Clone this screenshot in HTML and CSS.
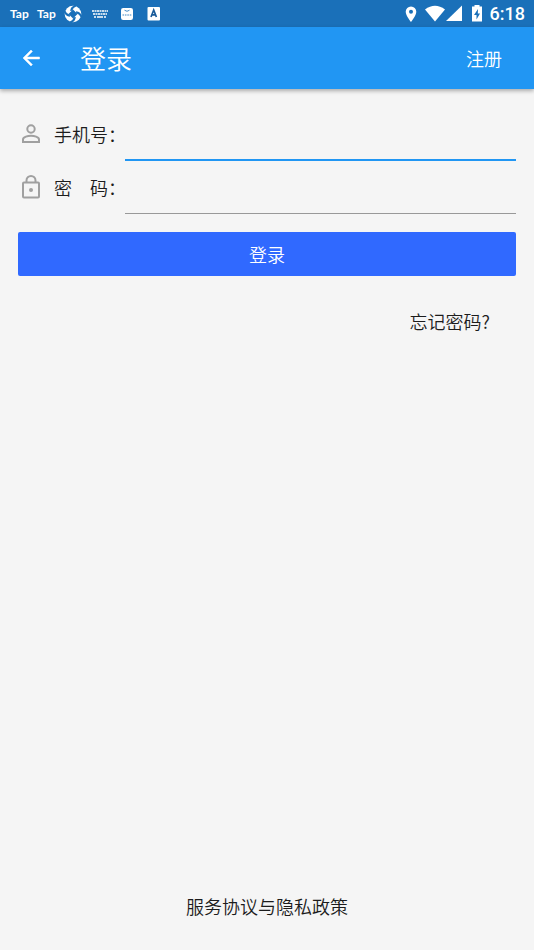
FILE: index.html
```html
<!DOCTYPE html>
<html lang="zh-CN">
<head>
<meta charset="utf-8">
<meta name="viewport" content="width=device-width, initial-scale=1">
<title>登录</title>
<link rel="stylesheet" href="styles.css">
</head>
<body>
<div class="status">
  <div class="status-group notices">
    <span class="tap">Tap</span>
    <span class="tap">Tap</span>
    <svg class="notice" viewBox="0 0 18 18"><circle cx="9" cy="9" r="8.300" fill="#fff"/><g fill="#1a70b9"><path d="M9 4.500L13.500 9 9 13.500 4.500 9z"/><path d="M8.200 5.800Q9 2.500 12.500 1.200L11.500.2Q6.500 1 6.200 6z"/><path d="M12.200 8.200Q15.500 9 16.800 12.500L17.800 11.500Q17 6.500 12 6.200z"/><path d="M9.800 12.200Q9 15.500 5.500 16.800L6.500 17.800Q11.500 17 11.800 12z"/><path d="M5.800 9.800Q2.500 9 1.200 5.500L.2 6.500Q1 11.500 6 11.800z"/></g></svg>
    <svg class="notice" viewBox="0 0 18 18"><g stroke="#fff" stroke-width="1.700" stroke-dasharray="2 .5"><path d="M1 6h16M2 9h14"/></g><path d="M3 12h2M6 12h6M13 12h2" stroke="#fff" stroke-width="1.700"/></svg>
    <svg class="notice" viewBox="0 0 18 18"><rect x="3" y="3" width="12" height="12" rx="2.200" fill="#fff"/><path d="M6.500 5.200q2.500 2.200 5 0" fill="none" stroke="#1a70b9" opacity=".8"/><path d="M4.500 10h9" stroke="#1a70b9" stroke-width="1.400" stroke-dasharray="1.600 .8" opacity=".55"/></svg>
    <svg class="notice" viewBox="0 0 18 18"><rect x="2.500" y="2" width="12.500" height="13.500" rx="1" fill="#fff"/><path d="M6 12l2.700-7 2.700 7M7 9.800h3.500" fill="none" stroke="#1a5b99" stroke-width="1.700"/></svg>
  </div>
  <div class="status-group">
    <svg class="pin" viewBox="0 0 12 18"><path fill="#fff" fill-rule="evenodd" d="M6 1.500a5.300 5.300 0 0 0-5.300 5.300C.7 10.800 6 17 6 17s5.300-6.200 5.300-10.200A5.300 5.300 0 0 0 6 1.500zm0 3.300a2 2 0 1 1 0 4 2 2 0 0 1 0-4z"/></svg>
    <svg class="wifi" viewBox="0 0 20 18"><path fill="#fff" d="M0 4.500Q10-3 20 4.500L10 16.500z"/></svg>
    <svg class="signal" viewBox="0 0 16 18"><path fill="#fff" d="M16 .5v15.500H0z"/></svg>
    <svg class="battery" viewBox="0 0 12 18"><path fill="#fff" d="M3.500 0h5v1.500H11V16.500H1V1.500h2.500z"/><path fill="#1a70b9" d="M7 4L3 10h2.500v4.500L9 8.500H6.800z"/></svg>
    <time>6:18</time>
  </div>
</div>
<header class="appbar">
  <button class="back" type="button" aria-label="返回"><svg viewBox="0 0 24 24"><path fill="#fff" stroke="#fff" stroke-width=".5" d="M20.500 11H7.830l5.590-5.590L12 4l-8 8 8 8 1.410-1.410L7.830 13H20.500z"/></svg></button>
  <h1>登录</h1>
  <a class="register" href="#register">注册</a>
</header>
<main>
  <form>
    <div class="row">
      <svg class="field-icon" viewBox="0 0 26 26"><g fill="none" stroke="#a0a0a0" stroke-width="2"><circle cx="13" cy="8" r="3.700"/><path d="M5 21v-2.500c0-2.600 5-3.700 8-3.700s8 1.100 8 3.700V21z"/></g></svg>
      <label for="phone">手机号：</label>
      <input id="phone" class="active" type="tel">
    </div>
    <div class="row">
      <svg class="field-icon" viewBox="0 0 26 26"><g fill="none" stroke="#a0a0a0" stroke-width="2"><rect x="5" y="8.500" width="16" height="15" rx="1"/><path d="M8.500 8.500V6.500a4.500 4.500 0 0 1 9 0v2"/></g><circle cx="13" cy="16" r="2" fill="#a0a0a0"/></svg>
      <label for="password">密　码：</label>
      <input id="password" type="password">
    </div>
    <button class="submit" type="submit">登录</button>
  </form>
  <a class="forgot" href="#forgot">忘记密码?</a>
</main>
<footer><a href="#terms">服务协议与隐私政策</a></footer>
</body>
</html>
```

FILE: styles.css
```css
* { box-sizing: border-box; }
body {
  margin: 0;
  min-height: 100vh;
  display: flex;
  flex-direction: column;
  background: #f5f5f5;
  color: #1c1c1c;
  font: 350 18px/26px "Noto Sans CJK SC", sans-serif;
}
svg { display: block; flex: none; }
a { color: inherit; text-decoration: none; }
button { border: 0; padding: 0; font: inherit; color: #fff; cursor: pointer; }

.status {
  height: 27px;
  padding: 0 9px 0 10px;
  display: flex;
  align-items: center;
  justify-content: space-between;
  background: #1a70b9;
  color: #fff;
}
.status-group { display: flex; align-items: center; }
.notices { gap: 9px; }
.tap { width: 18px; font: 700 12px/18px Lato, sans-serif; }
.notice { width: 18px; height: 18px; }
.pin { width: 12px; height: 18px; margin-right: 8px; }
.wifi { width: 20px; height: 18px; margin-right: 1px; }
.signal { width: 16px; height: 18px; margin-right: 9px; }
.battery { width: 12px; height: 18px; margin-right: 7px; }
time { font: 500 18px/26px Roboto, sans-serif; }

.appbar {
  height: 62px;
  padding: 0 32px 0 19px;
  display: flex;
  align-items: center;
  background: #2196f3;
  color: #fff;
  box-shadow: 0 2px 4px rgba(0, 0, 0, .3);
}
.back { background: none; }
.back svg { width: 24px; height: 24px; }
h1 { flex: 1; margin: 0 0 0 37px; font-size: 26px; line-height: 38px; font-weight: 350; }

main { flex: 1; padding: 18px 18px; display: flex; flex-direction: column; }
.row { height: 53px; display: flex; align-items: center; }
.field-icon { width: 26px; height: 26px; margin-right: 10px; }
label { flex: none; width: 71px; white-space: nowrap; }
input {
  flex: 1;
  min-width: 0;
  height: 54px;
  align-self: flex-start;
  border: 0;
  border-bottom: 1px solid #999;
  border-radius: 0;
  padding: 0 4px;
  background: none;
  font: inherit;
  outline: none;
}
input.active { border-bottom: 2px solid #2196f3; }
.submit {
  width: 100%;
  height: 44px;
  margin-top: 19px;
  border-radius: 2px;
  background: #3069ff;
}
.forgot { align-self: flex-end; margin: 32px 26px 0 0; }
footer { padding-bottom: 31px; text-align: center; }
```
